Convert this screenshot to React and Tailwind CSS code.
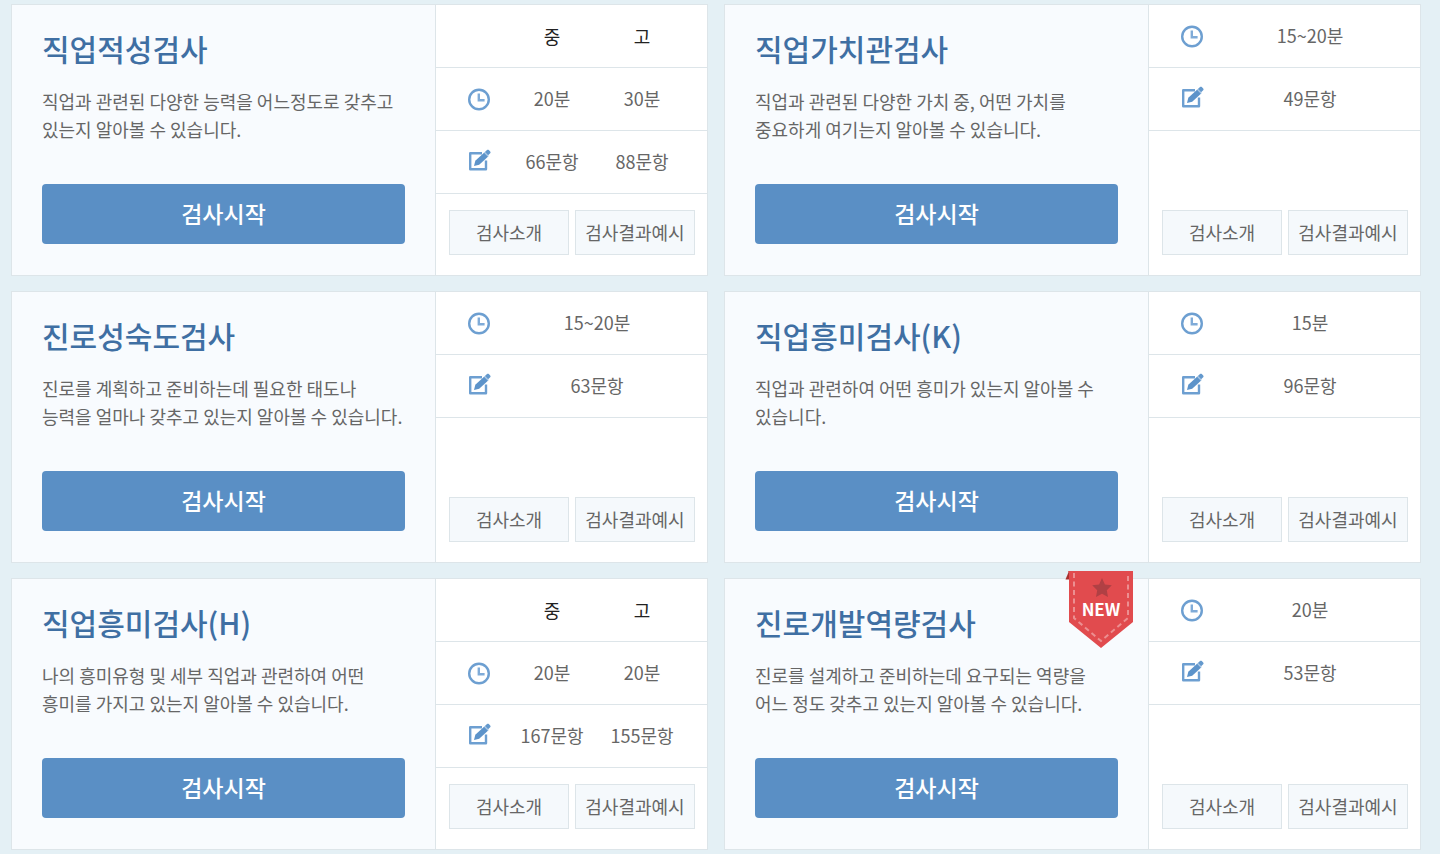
import React from 'react';

const tests = [
  {
    title: '직업적성검사',
    desc: ['직업과 관련된 다양한 능력을 어느정도로 갖추고', '있는지 알아볼 수 있습니다.'],
    grades: ['중', '고'],
    times: ['20분', '30분'],
    questions: ['66문항', '88문항'],
  },
  {
    title: '직업가치관검사',
    desc: ['직업과 관련된 다양한 가치 중, 어떤 가치를', '중요하게 여기는지 알아볼 수 있습니다.'],
    times: ['15~20분'],
    questions: ['49문항'],
  },
  {
    title: '진로성숙도검사',
    desc: ['진로를 계획하고 준비하는데 필요한 태도나', '능력을 얼마나 갖추고 있는지 알아볼 수 있습니다.'],
    times: ['15~20분'],
    questions: ['63문항'],
  },
  {
    title: '직업흥미검사(K)',
    desc: ['직업과 관련하여 어떤 흥미가 있는지 알아볼 수', '있습니다.'],
    times: ['15분'],
    questions: ['96문항'],
  },
  {
    title: '직업흥미검사(H)',
    desc: ['나의 흥미유형 및 세부 직업과 관련하여 어떤', '흥미를 가지고 있는지 알아볼 수 있습니다.'],
    grades: ['중', '고'],
    times: ['20분', '20분'],
    questions: ['167문항', '155문항'],
  },
  {
    title: '진로개발역량검사',
    desc: ['진로를 설계하고 준비하는데 요구되는 역량을', '어느 정도 갖추고 있는지 알아볼 수 있습니다.'],
    times: ['20분'],
    questions: ['53문항'],
    isNew: true,
  },
];

function ClockIcon() {
  return (
    <svg width="24" height="24" viewBox="0 0 24 24" fill="none" aria-hidden="true">
      <circle cx="12" cy="12.5" r="9.8" stroke="#6d9fd1" strokeWidth="2.4" />
      <path d="M11.8 6.5v6.8H17.6" stroke="#7fabd8" strokeWidth="2.4" />
    </svg>
  );
}

function EditIcon() {
  return (
    <svg width="24" height="24" viewBox="0 0 24 24" fill="none" aria-hidden="true">
      <path d="M15 4.2H3.2V20.2H19V11.5" stroke="#6d9fd1" strokeWidth="2.4" strokeLinejoin="round" />
      <path d="M7 17l1.3-5.2 9-8.3 3.9 4-9 8.3z" fill="#5c93ca" />
      <path d="M17 3.8l1-.9 3.9 4-1 .9z" fill="#a9c8e6" />
      <path d="M17.9 3l2.1-1.9c.5-.5 1.3-.5 1.8 0l1.4 1.5c.5.5.5 1.2 0 1.7l-2.1 2z" fill="#6499cd" />
    </svg>
  );
}

function NewRibbon() {
  return (
    <svg className="absolute -top-2 right-[14px]" width="69" height="78" viewBox="0 0 69 78" role="img" aria-label="NEW">
      <path d="M4 0L0.5 8.5H4z" fill="#a8302f" />
      <path d="M3 0H68V51L36 77L4 51V2z" fill="#e14b4e" />
      <path d="M9 2V47L36 70L63 47V2" fill="none" stroke="#ec8f91" strokeWidth="2" strokeDasharray="5 3.5" />
      <path d="M37 7l2.9 6.4 6.900.9-5 4.900 1.200 6.800-6-3.300-6 3.300 1.200-6.800-5-4.900 6.900-.9z" fill="#b04044" />
      <text x="36" y="45" textAnchor="middle" fill="#ffffff" fontSize="17" fontWeight="700" fontFamily="'Noto Sans CJK KR', sans-serif">
        NEW
      </text>
    </svg>
  );
}

function ValueCells({ values }) {
  if (values.length === 1) {
    return <td colSpan={2} className="pr-5 pb-0.5 text-center">{values[0]}</td>;
  }
  return (
    <>
      <td className="pb-0.5 text-center">{values[0]}</td>
      <td className="pr-5 pb-0.5 text-center">{values[1]}</td>
    </>
  );
}

function TestCard({ test }) {
  return (
    <article className="flex border border-[#dde5e9] bg-white">
      <div className="relative flex flex-1 flex-col bg-[#f8fbfe] px-[30px] pt-5 pb-[31px]">
        <h2 className="text-[30px] leading-[46px] font-medium text-[#3f6fa3]">{test.title}</h2>
        <p className="mt-4 mb-[41px] text-lg leading-7 whitespace-nowrap text-[#666666]">
          {test.desc[0]}
          <br />
          {test.desc[1]}
        </p>
        <button type="button" className="mt-auto h-[60px] w-full rounded bg-[#5a8fc5] pb-0.5 text-[23px] font-medium text-white">
          검사시작
        </button>
        {test.isNew && <NewRibbon />}
      </div>

      <div className="flex w-[272px] shrink-0 flex-col border-l border-[#dde5e9]">
        <table className="w-full table-fixed border-separate border-spacing-0 text-lg text-[#666666] [&_td]:h-[63px] [&_td]:border-b [&_td]:border-[#dde5e9] [&_th]:h-[63px] [&_th]:border-b [&_th]:border-[#dde5e9]">
          <colgroup>
            <col className="w-[71px]" />
            <col className="w-[90px]" />
            <col />
          </colgroup>
          <tbody>
            {test.grades && (
              <tr className="text-[#222222]">
                <td></td>
                <th scope="col" className="font-normal">{test.grades[0]}</th>
                <th scope="col" className="pr-5 font-normal">{test.grades[1]}</th>
              </tr>
            )}
            <tr>
              <th scope="row" aria-label="검사시간" className="pl-[31px]">
                <ClockIcon />
              </th>
              <ValueCells values={test.times} />
            </tr>
            <tr>
              <th scope="row" aria-label="문항수" className="pl-[31px] pb-0.5">
                <EditIcon />
              </th>
              <ValueCells values={test.questions} />
            </tr>
          </tbody>
        </table>

        <div className="mt-auto flex gap-1.5 pr-3 pb-5 pl-[13px]">
          <button type="button" className="h-[45px] flex-1 border border-[#dde5e9] bg-[#f5f9fc] pb-0.5 text-lg whitespace-nowrap text-[#666666]">
            검사소개
          </button>
          <button type="button" className="h-[45px] flex-1 border border-[#dde5e9] bg-[#f5f9fc] pb-0.5 text-lg whitespace-nowrap text-[#666666]">
            검사결과예시
          </button>
        </div>
      </div>
    </article>
  );
}

function App() {
  return (
    <main className="min-h-screen bg-[#e4f0f5] pt-1 pr-[19px] pb-1 pl-[11px] font-['Noto_Sans_CJK_KR',sans-serif]">
      <div className="grid grid-cols-2 gap-x-4 gap-y-[15px]">
        {tests.map(test => (
          <TestCard key={test.title} test={test} />
        ))}
      </div>
    </main>
  );
}

export default App;
